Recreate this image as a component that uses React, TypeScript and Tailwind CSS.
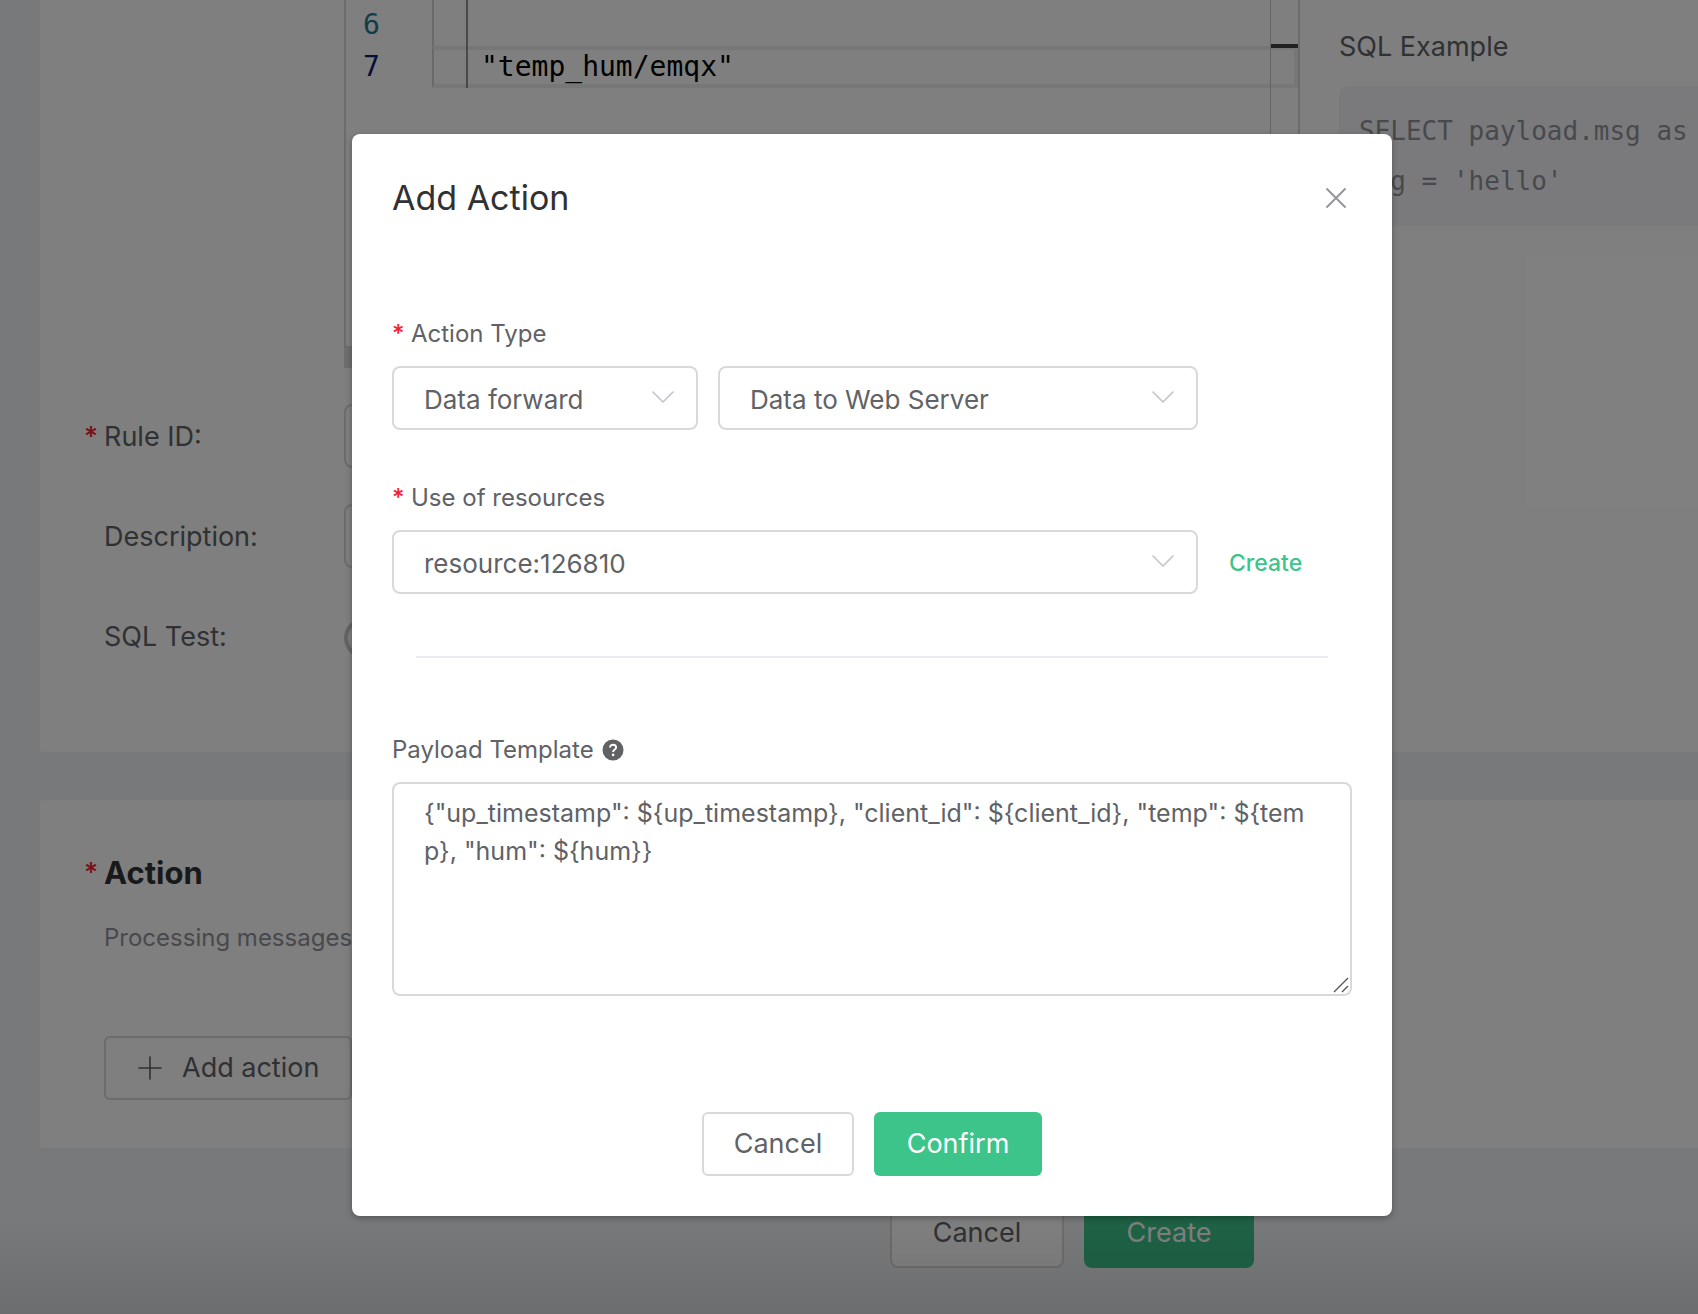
import { useState } from "react";
import type { ReactNode } from "react";

function Required() {
  return <span className="font-medium text-[#f5222d]">*</span>;
}

function Chevron() {
  return (
    <svg
      aria-hidden="true"
      viewBox="0 0 22 12"
      className="pointer-events-none absolute top-[25px] right-[24px] h-3 w-[22px]"
      fill="none"
      stroke="#c0c4cc"
      strokeWidth="1.6"
      strokeLinecap="round"
      strokeLinejoin="round"
    >
      <path d="M1 1l10 10L21 1" />
    </svg>
  );
}

function Select({ id, label, value }: { id: string; label: string; value: string }) {
  return (
    <div className="relative">
      <select
        id={id}
        aria-label={label}
        className="block h-16 w-full appearance-none rounded-lg border-2 border-[#d9d9d9] bg-white pt-[2px] pr-14 pl-[30px] text-[26px] text-[#606266]"
      >
        <option>{value}</option>
      </select>
      <Chevron />
    </div>
  );
}

function FormRow({ label, id, required, children }: { label: string; id: string; required?: boolean; children: ReactNode }) {
  return (
    <div className="flex h-16 items-center">
      <label htmlFor={id} className="flex w-[260px] items-center pt-[2px] text-[27px] text-[#606266]">
        <span className="w-5">{required && <Required />}</span>
        {label}
      </label>
      <div className="flex-1">{children}</div>
    </div>
  );
}

function Editor() {
  return (
    <div className="ml-[260px] border-b-[20px] border-[#dcdcdc]">
      <div className="flex h-[348px] border-x-2 border-b-2 border-[#d9d9d9] font-['DejaVu_Sans_Mono',monospace] text-[28px] leading-[42px]">
        <div className="w-[86px] pt-1 pl-[17px]">
          <div className="h-[42px] text-[#237893]">6</div>
          <div className="h-[42px] text-[#0b216f]">7</div>
        </div>
        <div className="relative flex-1 text-black">
          <div className="flex h-[46px] border-l-2 border-[#d3d3d3]">
            <div className="w-[34px] border-r-2 border-[#939393]" />
          </div>
          <div className="flex h-[42px] items-center border-4 border-l-2 border-[#eeeeee] border-l-[#d3d3d3]">
            <div className="-my-1 h-[42px] w-[34px] border-r-2 border-[#939393]" />
            <span className="pl-[13px] whitespace-pre">"temp_hum/emqx"</span>
          </div>
          <div className="absolute top-0 right-0 h-[346px] w-7 border-l border-[#c8c8c8]">
            <div className="mt-11 h-1 bg-[#424242]" />
          </div>
        </div>
      </div>
    </div>
  );
}

function RulePage() {
  return (
    <main className="pl-10">
      <section className="flex h-[752px] rounded-bl bg-white pl-11">
        <div className="min-w-0 flex-1">
          <Editor />
          <div className="mt-9 flex flex-col gap-9">
            <FormRow id="rule-id" label="Rule ID:" required>
              <input id="rule-id" className="block h-16 w-full rounded-lg border-2 border-[#d9d9d9] bg-white px-7 text-[26px]" />
            </FormRow>
            <FormRow id="description" label="Description:">
              <input id="description" className="block h-16 w-full rounded-lg border-2 border-[#d9d9d9] bg-white px-7 text-[26px]" />
            </FormRow>
            <FormRow id="sql-test" label="SQL Test:">
              <input
                id="sql-test"
                type="checkbox"
                role="switch"
                className="mt-1 block h-10 w-20 appearance-none rounded-full border-4 border-[#c8c8c8]"
              />
            </FormRow>
          </div>
        </div>
        <aside className="ml-[39px] w-[359px] pt-[27px]">
          <h3 className="text-[27px] leading-10 text-[#606266]">SQL Example</h3>
          <pre className="mt-[19px] h-[140px] rounded-l-lg bg-[#f5f5fa] py-5 pl-5 font-['DejaVu_Sans_Mono',monospace] text-[26px] leading-[50px] text-[#909399]">
            {"SELECT payload.msg as\nmsg = 'hello'"}
          </pre>
        </aside>
      </section>

      <section className="mt-12 h-[348px] rounded-l bg-white pt-[52px] pl-11">
        <h2 className="flex text-[31px] leading-[42px] font-bold text-[#333333]">
          <span className="w-5 text-[27px]">
            <Required />
          </span>
          Action
        </h2>
        <p className="mt-7 ml-5 text-2xl leading-8 text-[#909399]">Processing messages</p>
        <button
          type="button"
          className="mt-[82px] ml-5 flex h-16 w-[248px] items-center rounded-md border-2 border-[#d9d9d9] bg-white pl-8 text-[27px] text-[#606266]"
        >
          <svg aria-hidden="true" viewBox="0 0 24 24" className="mr-5 size-6" fill="none" stroke="#606266" strokeWidth="1.6" strokeLinecap="round">
            <path d="M12 1v22M1 12h22" />
          </svg>
          Add action
        </button>
      </section>

      <footer className="relative flex h-[166px] justify-center gap-5 pt-[50px] pl-[406px]">
        <button type="button" className="h-[70px] w-[174px] rounded-lg border-2 border-[#d9d9d9] bg-white text-[27px] text-[#606266]">
          Cancel
        </button>
        <button type="button" className="h-[70px] w-[170px] rounded-lg bg-[#3dc48a] text-[27px] text-white">
          Create
        </button>
        <div className="pointer-events-none absolute inset-x-0 bottom-0 -left-10 h-24 bg-linear-to-b from-transparent to-black/10" />
      </footer>
    </main>
  );
}

function ActionDialog() {
  const [payload, setPayload] = useState(
    '{"up_timestamp": ${up_timestamp}, "client_id": ${client_id}, "temp": ${temp}, "hum": ${hum}}',
  );
  return (
    <div className="absolute inset-0 flex items-start justify-center bg-black/50 pt-[134px] pl-[46px]">
      <div
        role="dialog"
        aria-modal="true"
        aria-labelledby="dialog-title"
        className="w-[1040px] rounded-lg bg-white p-10 shadow-[0_2px_6px_rgba(0,0,0,0.3)]"
      >
        <header className="flex items-center justify-between">
          <h1 id="dialog-title" className="text-[34px] leading-[48px] text-[#303133]">
            Add Action
          </h1>
          <button type="button" aria-label="Close" className="mr-[6px] p-0">
            <svg viewBox="0 0 20 20" className="size-5" fill="none" stroke="#909399" strokeWidth="1.8" strokeLinecap="round">
              <path d="M1 1l18 18M19 1L1 19" />
            </svg>
          </button>
        </header>

        <form className="mt-[94px]">
          <label htmlFor="action-type" className="flex text-2xl leading-9 text-[#606266]">
            <span className="w-[19px]">
              <Required />
            </span>
            Action Type
          </label>
          <div className="mt-[14px] mr-[154px] grid grid-cols-[306px_1fr] gap-5">
            <Select id="action-type" label="Action Type" value="Data forward" />
            <Select id="action-target" label="Action target" value="Data to Web Server" />
          </div>

          <label htmlFor="resource" className="mt-[50px] flex text-2xl leading-9 text-[#606266]">
            <span className="w-[19px]">
              <Required />
            </span>
            Use of resources
          </label>
          <div className="mt-[14px] flex items-center">
            <div className="w-[806px]">
              <Select id="resource" label="Use of resources" value="resource:126810" />
            </div>
            <a href="#create" className="ml-[31px] pt-[3px] text-[23px] font-medium text-[#3dc48a]">
              Create
            </a>
          </div>

          <hr className="mx-6 mt-[62px] border-t-2 border-[#ebebf0]" />

          <label htmlFor="payload" className="mt-[74px] flex items-center text-2xl leading-9 text-[#606266]">
            Payload Template
            <svg aria-hidden="true" viewBox="0 0 22 22" className="ml-2 size-[22px]" fill="none">
              <circle cx="11" cy="11" r="10.5" fill="#606266" />
              <path d="M8 8.6C8 6.900 9.300 5.700 11.100 5.700s3 1.100 3 2.700c0 2.100-3 2.300-3 4.700" stroke="#fff" strokeWidth="1.900" />
              <circle cx="11.100" cy="15.900" r="1.300" fill="#fff" />
            </svg>
          </label>
          <div className="relative mt-[14px]">
            <textarea
              id="payload"
              value={payload}
              onChange={(e) => setPayload(e.target.value)}
              spellCheck={false}
              className="block h-[214px] w-full resize-none rounded-lg border-2 border-[#d9d9d9] bg-white px-[30px] pt-[10px] text-[25px] leading-[38px] break-all text-[#606266]"
            />
            <svg
              aria-hidden="true"
              viewBox="0 0 16 16"
              className="pointer-events-none absolute right-[3px] bottom-[3px] size-4"
              fill="none"
              stroke="#55565a"
              strokeWidth="1.4"
            >
              <path d="M1 15L15 1M9 15l6-6" />
            </svg>
          </div>

          <div className="mt-[116px] flex justify-center gap-5">
            <button type="button" className="h-16 w-[152px] rounded-md border-2 border-[#d9d9d9] bg-white text-[27px] text-[#606266]">
              Cancel
            </button>
            <button type="button" className="h-16 w-[168px] rounded-md bg-[#3dc48a] text-[27px] text-white">
              Confirm
            </button>
          </div>
        </form>
      </div>
    </div>
  );
}

export default function App() {
  return (
    <div className="relative min-h-screen overflow-hidden bg-[#f0f3f6] font-['Inter',sans-serif]">
      <RulePage />
      <ActionDialog />
    </div>
  );
}
